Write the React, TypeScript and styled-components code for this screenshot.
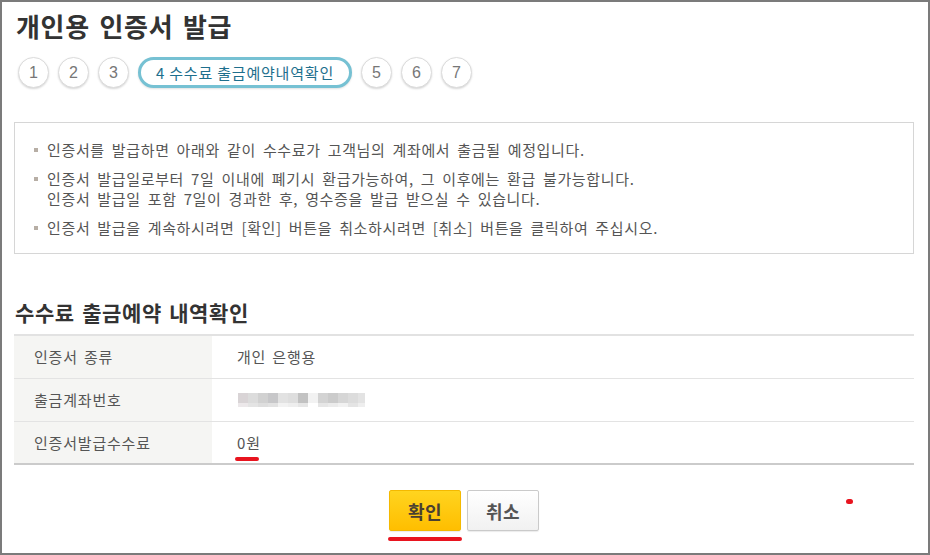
import React from 'react';
import styled, { createGlobalStyle } from 'styled-components';

const GlobalStyle = createGlobalStyle`
  html, body {
    margin: 0;
    padding: 0;
    background: #ffffff;
  }
  body {
    font-family: "Noto Sans CJK KR", "Noto Sans", sans-serif;
    color: #555;
  }
`;

const Frame = styled.div`
  position: relative;
  width: 930px;
  height: 555px;
  box-sizing: border-box;
  border: 2px solid #7b7b7b;
  padding: 9px 14px 0 12px;
  background: #fff;
  overflow: hidden;
`;

const Title = styled.h1`
  margin: 0 0 0 2px;
  font-size: 26px;
  line-height: 30px;
  letter-spacing: 0.7px;
  word-spacing: 3px;
  font-weight: 700;
  color: #333;
`;

const Steps = styled.ol`
  display: flex;
  gap: 9px;
  list-style: none;
  margin: 16px 0 0 4px;
  padding: 0;
`;

const Step = styled.li<{ $active?: boolean }>`
  box-sizing: border-box;
  height: 31px;
  width: ${({ $active }) => ($active ? '214px' : '31px')};
  display: flex;
  align-items: center;
  justify-content: center;
  border-radius: 16px;
  border: ${({ $active }) => ($active ? '3px solid #76c1d3' : '1px solid #dcdcdc')};
  box-shadow: ${({ $active }) =>
    $active ? '0 1px 2px rgba(0,0,0,0.12)' : '0 1px 2px rgba(0,0,0,0.16)'};
  font-family: ${({ $active }) =>
    $active ? '"Noto Sans CJK KR", sans-serif' : '"Liberation Sans", Arial, sans-serif'};
  font-size: ${({ $active }) => ($active ? '15px' : '16px')};
  letter-spacing: ${({ $active }) => ($active ? '0.8px' : '0')};
  white-space: nowrap;
  color: ${({ $active }) => ($active ? '#1e6f8d' : '#777')};
  background: #fff;
`;

const Notice = styled.ul`
  list-style: none;
  margin: 34px 0 0 0;
  padding: 17px 19px 15px 19px;
  border: 1px solid #d6d6d6;
`;

const NoticeItem = styled.li`
  position: relative;
  padding-left: 13px;
  font-size: 15px;
  line-height: 20px;
  letter-spacing: 0.65px;
  word-spacing: 3px;
  color: #555;
  & + & {
    margin-top: 9px;
  }
  &::before {
    content: '';
    position: absolute;
    left: 0;
    top: 8px;
    width: 4px;
    height: 4px;
    background: #b7aea5;
  }
`;

const SectionTitle = styled.h2`
  margin: 44px 0 8px 1px;
  font-size: 21px;
  line-height: 28px;
  letter-spacing: 0.6px;
  word-spacing: 2px;
  font-weight: 700;
  color: #333;
`;

const Table = styled.table`
  width: 900px;
  border-collapse: collapse;
  border-top: 2px solid #e2e2e2;
  border-bottom: 2px solid #cbcbcb;
`;

const Row = styled.tr`
  & + & {
    border-top: 1px solid #e3e3e3;
  }
`;

const Label = styled.th`
  width: 198px;
  box-sizing: border-box;
  height: 43px;
  padding: 0 0 0 20px;
  text-align: left;
  font-weight: 400;
  font-size: 15px;
  letter-spacing: 0.8px;
  word-spacing: 2px;
  color: #555;
  background: #f5f5f3;
`;

const Value = styled.td`
  padding: 0 0 0 25px;
  font-size: 15px;
  letter-spacing: 0.8px;
  word-spacing: 2px;
  color: #555;
`;

const Marked = styled.span<{ $offset: number; $left: number; $right: number }>`
  position: relative;
  display: inline-block;
  &::after {
    content: '';
    position: absolute;
    left: ${({ $left }) => -$left}px;
    right: ${({ $right }) => -$right}px;
    bottom: ${({ $offset }) => -$offset}px;
    height: 4px;
    border-radius: 2px;
    background: #e8141f;
  }
`;

const Mosaic = styled.svg`
  display: block;
  margin-left: 1px;
`;

const Buttons = styled.div`
  display: flex;
  justify-content: center;
  gap: 6px;
  margin-top: 25px;
`;

const Button = styled.button<{ $primary?: boolean }>`
  box-sizing: border-box;
  width: 72px;
  height: 41px;
  border-radius: 2px;
  font-family: "Noto Sans CJK KR", sans-serif;
  font-size: 18px;
  font-weight: 700;
  letter-spacing: 0.5px;
  padding: 0;
  cursor: pointer;
  border: 1px solid ${({ $primary }) => ($primary ? '#f4b900' : '#cacaca')};
  color: ${({ $primary }) => ($primary ? '#4a4032' : '#555')};
  background: ${({ $primary }) =>
    $primary
      ? 'linear-gradient(to bottom, #ffd41f, #ffbe00)'
      : 'linear-gradient(to bottom, #ffffff, #f1f1f1)'};
  box-shadow: 0 1px 1px rgba(0, 0, 0, 0.08);
`;

const Dot = styled.span`
  position: absolute;
  left: 844px;
  top: 497px;
  width: 7px;
  height: 5px;
  border-radius: 3px;
  background: #e8141f;
`;

const mosaicTop = ['#d9d4d6', '#dcdcdc', '#d1d1d1', '#c7c7c9', '#e2e2e2', '#dedede', '#c2c2c2', '#f2f2f2', '#d3d3d3', '#cbcbcb', '#d6d6d6', '#dcdcdc', '#e3e3e3'];
const mosaicBottom = ['#ece8ea', '#e4e4e4', '#dedede', '#e2e2e2', '#f2f2f2', '#eeeeee', '#e6e6e6', '#ffffff', '#e6e6e6', '#ebebeb', '#f1f1f1', '#e4e4e4', '#eeeeee'];

const steps = ['1', '2', '3', '4 수수료 출금예약내역확인', '5', '6', '7'];

const App = () => {
  return (
    <>
      <GlobalStyle />
      <Frame>
        <Title>개인용 인증서 발급</Title>
        <Steps>
          {steps.map((s, i) => (
            <Step key={s} $active={i === 3}>
              {s}
            </Step>
          ))}
        </Steps>
        <Notice>
          <NoticeItem>
            인증서를 발급하면 아래와 같이 수수료가 고객님의 계좌에서 출금될 예정입니다.
          </NoticeItem>
          <NoticeItem>
            인증서 발급일로부터 7일 이내에 폐기시 환급가능하여, 그 이후에는 환급 불가능합니다.
            <br />
            인증서 발급일 포함 7일이 경과한 후, 영수증을 발급 받으실 수 있습니다.
          </NoticeItem>
          <NoticeItem>
            인증서 발급을 계속하시려면 [확인] 버튼을 취소하시려면 [취소] 버튼을 클릭하여 주십시오.
          </NoticeItem>
        </Notice>
        <SectionTitle>수수료 출금예약 내역확인</SectionTitle>
        <Table>
          <tbody>
            <Row>
              <Label>인증서 종류</Label>
              <Value>개인 은행용</Value>
            </Row>
            <Row>
              <Label>출금계좌번호</Label>
              <Value>
                <Mosaic width="127" height="14" viewBox="0 0 127 14">
                  {mosaicTop.map((c, i) => (
                    <rect key={`t${i}`} x={i * 10} y={0} width={10} height={10} fill={c} />
                  ))}
                  {mosaicBottom.map((c, i) => (
                    <rect key={`b${i}`} x={i * 10} y={10} width={10} height={4} fill={c} />
                  ))}
                </Mosaic>
              </Value>
            </Row>
            <Row>
              <Label>인증서발급수수료</Label>
              <Value>
                <Marked $offset={8} $left={2} $right={-2}>0원</Marked>
              </Value>
            </Row>
          </tbody>
        </Table>
        <Buttons>
          <Marked $offset={10} $left={1} $right={1}>
            <Button $primary>확인</Button>
          </Marked>
          <Button>취소</Button>
        </Buttons>
        <Dot />
      </Frame>
    </>
  );
};

export default App;
